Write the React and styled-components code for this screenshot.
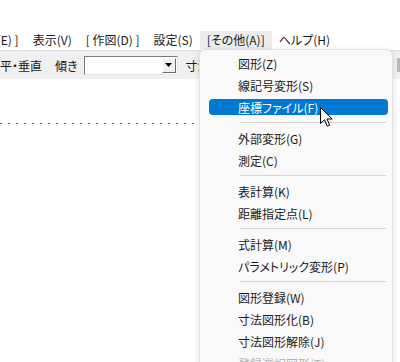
import React from "react";
import styled, { createGlobalStyle } from "styled-components";

const GlobalStyle = createGlobalStyle`
  body {
    margin: 0;
    background: #ffffff;
    font-family: "Noto Sans CJK JP", "Noto Sans", sans-serif;
    font-size: 12px;
    color: #1a1a1a;
  }
`;

const Frame = styled.div`
  position: relative;
  width: 400px;
  height: 362px;
  overflow: hidden;
  background: #ffffff;
  font-feature-settings: "palt";
`;

const TopSpace = styled.div`
  height: 31px;
`;

const MenuBar = styled.div`
  display: flex;
  height: 18px;
  align-items: stretch;
  margin-left: ${(p) => p.$shift}px;
`;

const MenuBarItem = styled.div`
  display: flex;
  align-items: center;
  padding: 0 7px;
  white-space: nowrap;
  line-height: 18px;
  background: ${(p) => (p.$open ? "#ececec" : "transparent")};
`;

const Toolbar = styled.div`
  display: flex;
  align-items: center;
  height: 28px;
  border-top: 1px solid #dadada;
  background: #f0f0f0;
  white-space: nowrap;
  margin-top: 1px;
`;

const ToolLabel = styled.span`
  margin-left: ${(p) => p.$ml}px;
  margin-right: ${(p) => p.$mr || 0}px;
`;

const Combo = styled.div`
  display: flex;
  width: 94px;
  height: 19px;
  box-sizing: border-box;
  border: 1px solid #7a7a7a;
  border-right-color: #e3e3e3;
  border-bottom-color: #e3e3e3;
  background: #ffffff;
  padding: 1px;
`;

const ComboField = styled.div`
  flex: 1;
`;

const ComboButton = styled.div`
  width: 14px;
  display: flex;
  align-items: center;
  justify-content: center;
  background: #f0f0f0;
  border: 1px solid #ffffff;
  border-right-color: #696969;
  border-bottom-color: #696969;
  box-sizing: border-box;
`;

const Canvas = styled.div`
  padding-top: 44px;
`;

const DottedLine = styled.div`
  width: 196px;
  height: 1px;
  background: repeating-linear-gradient(
    to right,
    #d000d8 0 2px,
    transparent 2px 8px
  );
`;

const ScrollEdge = styled.div`
  position: absolute;
  right: 0;
  top: 58px;
  width: 3px;
  height: 14px;
  background: #b9b9b9;
`;

const Dropdown = styled.div`
  position: absolute;
  left: 199px;
  top: 49px;
  width: 194px;
  height: 330px;
  box-sizing: border-box;
  padding-top: 2px;
  background: #f9f9f9;
  border: 1px solid #e2e2e2;
  border-radius: 7px;
  box-shadow: 0 2px 6px rgba(0, 0, 0, 0.12);
`;

const Item = styled.div`
  height: 22px;
  display: flex;
  align-items: center;
  padding: 0 4px 0 9px;
`;

const ItemBody = styled.div`
  flex: 1;
  height: 16px;
  display: flex;
  align-items: center;
  padding-left: 29px;
  border-radius: 4px;
  white-space: nowrap;
  background: ${(p) => (p.$active ? "#0078d4" : "transparent")};
  color: ${(p) => (p.$active ? "#ffffff" : p.$disabled ? "#b4b4b4" : "#1a1a1a")};
`;

const Separator = styled.div`
  height: 9px;
  display: flex;
  align-items: center;
  padding: 0 6px 0 40px;

  &::after {
    content: "";
    flex: 1;
    height: 1px;
    background: #d5d5d5;
  }
`;

const Cursor = styled.svg`
  position: absolute;
  left: 320px;
  top: 107px;
`;

const groups = [
  ["図形(Z)", "線記号変形(S)", "座標ファイル(F)"],
  ["外部変形(G)", "測定(C)"],
  ["表計算(K)", "距離指定点(L)"],
  ["式計算(M)", "パラメトリック変形(P)"],
  ["図形登録(W)", "寸法図形化(B)", "寸法図形解除(J)", "登録選択図形(T)"],
];

const App = () => {
  return (
    <>
      <GlobalStyle />
      <Frame>
        <TopSpace />
        <MenuBar $shift={-41}>
          <MenuBarItem>[ 編集(E) ]</MenuBarItem>
          <MenuBarItem>表示(V)</MenuBarItem>
          <MenuBarItem>[ 作図(D) ]</MenuBarItem>
          <MenuBarItem>設定(S)</MenuBarItem>
          <MenuBarItem $open>[その他(A)]</MenuBarItem>
          <MenuBarItem>ヘルプ(H)</MenuBarItem>
        </MenuBar>
        <Toolbar>
          <ToolLabel $ml={-12}>水平・垂直</ToolLabel>
          <ToolLabel $ml={13} $mr={6}>傾き</ToolLabel>
          <Combo>
            <ComboField />
            <ComboButton>
              <svg width="7" height="4" viewBox="0 0 7 4">
                <path d="M0 0h7L3.5 4z" fill="#000" />
              </svg>
            </ComboButton>
          </Combo>
          <ToolLabel $ml={8}>寸法</ToolLabel>
        </Toolbar>
        <Canvas>
          <DottedLine />
        </Canvas>
        <ScrollEdge />
        <Dropdown>
          {groups.map((g, gi) => (
            <React.Fragment key={gi}>
              {gi > 0 && <Separator />}
              {g.map((label) => (
                <Item key={label}>
                  <ItemBody
                    $active={label === "座標ファイル(F)"}
                    $disabled={label === "登録選択図形(T)"}
                  >
                    {label}
                  </ItemBody>
                </Item>
              ))}
            </React.Fragment>
          ))}
        </Dropdown>
        <Cursor width="13" height="20" viewBox="0 0 13 20">
          <path
            d="M0.5 0.5V16.5L4.5 12.8L7.2 19.2L9.6 18.2L7 12H12.2Z"
            fill="#ffffff"
            stroke="#000000"
            strokeWidth="1"
            strokeLinejoin="miter"
          />
        </Cursor>
      </Frame>
    </>
  );
};

export default App;
